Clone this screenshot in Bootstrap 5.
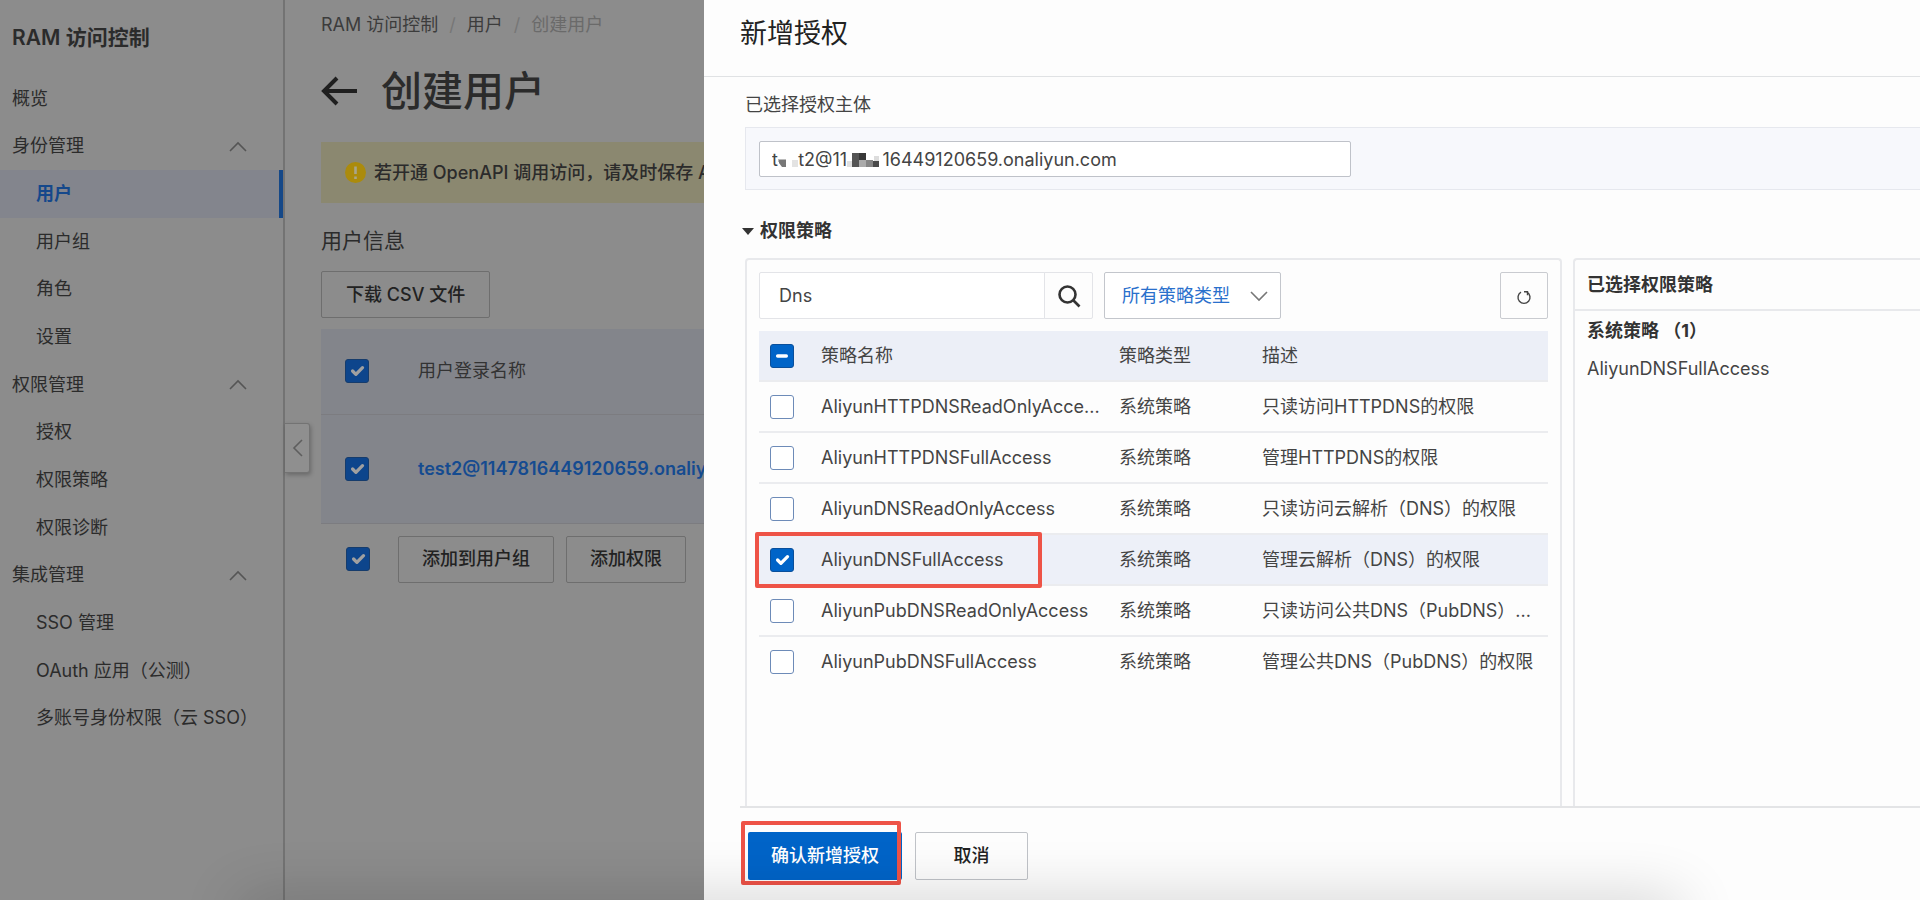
<!DOCTYPE html>
<html lang="zh-CN">
<head>
<meta charset="utf-8">
<meta name="viewport" content="width=device-width, initial-scale=1">
<title>RAM 访问控制 - 创建用户</title>
<link href="https://cdn.jsdelivr.net/npm/bootstrap@5.3.0/dist/css/bootstrap.min.css" rel="stylesheet">
<style>
  :root { --ink:#444; --line:#e3e4e8; --brand:#0064c8; --dim:#8c8c8c; --dim-ink:#2b2b2b; --dim-line:#6e6e6e; --dim-blue:#0d458c; --tint:#edf0f8; }
  body { font:400 18px/24px Inter,"Noto Sans CJK SC",sans-serif; background:var(--dim); color:var(--dim-ink); min-height:100vh; overflow:hidden; }
  a { color:inherit; text-decoration:none; }
  .form-control, .form-select, .btn { font-size:inherit; line-height:24px; border-radius:2px; color:var(--ink); }

  /* side navigation */
  .side { width:285px; border-right:2px solid #737373; min-height:100vh; }
  .side-title { font-size:21px; font-weight:600; padding:25px 12px 0; line-height:26px; }
  .side-menu { display:grid; grid-template-columns:minmax(0,1fr); grid-auto-rows:1fr; height:667px; margin-top:24px; }
  .side-menu a { display:flex; align-items:center; height:100%; padding:0 36px 0 12px; white-space:nowrap; }
  .side-menu .sub a { padding-left:36px; padding-right:0; }
  .side-menu .current a { background:#83858d; color:#15488b; font-weight:600; border-right:4px solid #154888; }
  .fold { left:285px; top:423px; width:25px; height:50px; background:#8f8f8f; border:1px solid #737373; border-left:0; border-radius:0 3px 3px 0; box-shadow:1px 2px 4px rgba(0,0,0,.25); }

  /* page behind the drawer */
  .page { padding:13px 0 0 36px; }
  .crumbs { --bs-breadcrumb-divider-color:#777; --bs-breadcrumb-item-padding-x:11px; --bs-breadcrumb-item-active-color:#6a6a6a; color:#3c3c3c; }
  .page h1 { font-size:41px; line-height:52px; font-weight:500; }
  .notice { height:61px; background:#8b8870; padding:0 24px; margin-top:25px; font-weight:500; }
  .page h2 { font-size:21px; line-height:28px; font-weight:400; }
  .btn-dim { border:1px solid var(--dim-line); color:#222; height:47px; padding:0 24px; font-weight:500; }
  .users { margin-top:11px; }
  .users td, .users th { background:#83858b; color:#333; border-color:#7c7c80; font-weight:400; padding:0; vertical-align:middle; }
  .users .pick { width:97px; padding-left:24px; }
  .users a { color:#154b90; font-weight:600; }
  .bulk { gap:12px; margin-top:12px; padding-left:25px; }
  .bulk .btn-dim { padding:0 23px; }

  /* tick boxes */
  .form-check-input[type=checkbox] { width:24px; height:24px; margin:0; border:1px solid #6d8bb8; border-radius:3px; display:block; }
  .form-check-input[type=checkbox]:checked, .form-check-input[type=checkbox]:indeterminate { background-color:var(--brand); border-color:#0a4f9b; }
  .shade .form-check-input[type=checkbox]:checked { background-color:var(--dim-blue); border-color:#163c6c; background-image:url("data:image/svg+xml,%3csvg xmlns='http://www.w3.org/2000/svg' viewBox='0 0 20 20'%3e%3cpath fill='none' stroke='%23a0a0a0' stroke-linecap='round' stroke-linejoin='round' stroke-width='3' d='m6 10 3 3 6-6'/%3e%3c/svg%3e"); }

  /* drawer */
  .drawer.offcanvas { --bs-offcanvas-width:calc(100vw - 704px); --bs-offcanvas-bg:#fdfdfd; --bs-offcanvas-border-width:0; color:var(--ink); transition:none; }
  .drawer-head { height:77px; padding:0 36px 9px; border-bottom:1px solid #e0e2e4; }
  .drawer-head h2 { font-size:27px; line-height:36px; font-weight:400; color:#222; }
  .drawer-main { padding:0 0 0 41px; }
  .who-label { margin:16px 0 10px; }
  .who { height:63px; background:#f7f8fc; border:1px solid #e6e8ee; border-right:0; padding:13px; }
  .who .form-control { width:592px; height:36px; border:1px solid #bfc2c9; padding:0 12px; }
  .mosaic { left:32px; top:25px; }
  .section-head { margin:29px 0 15px -3px; gap:6px; color:#333; }
  .panes { gap:11px; }
  .pane { border:2px solid #e8e9ec; border-bottom:0; border-radius:4px 4px 0 0; }
  .pane-left { width:817px; padding:12px 12px 0; }
  .pane-right { border-right:0; border-top-right-radius:0; }
  .pane-right > div { padding:0 12px; }
  .pane-right .picked-head { height:51px; border-bottom:2px solid #e8e9ec; color:#333; }
  .pane-right .picked-kind { margin:8px 0 14px; color:#333; }
  .tools { gap:11px; margin-bottom:12px; }
  .finder { width:334px; height:47px; }
  .finder .form-control { border-color:#e3e4e8; padding-left:19px; }
  .finder .btn { width:49px; border:1px solid #e3e4e8; }
  .kind { width:177px; height:47px; border:1px solid #c3c6cc; color:#2a70cc; padding:0 17px; background-image:url("data:image/svg+xml,%3csvg xmlns='http://www.w3.org/2000/svg' viewBox='0 0 18 12'%3e%3cpath fill='none' stroke='%23777' stroke-width='1.6' d='m1 2 8 8 8-8'/%3e%3c/svg%3e"); background-size:18px 12px; background-position:right 12px center; }
  .reload { width:48px; height:47px; border:1px solid #c9cbd0; }
  .rules { table-layout:fixed; white-space:nowrap; }
  .rules th, .rules td { height:51px; padding:0; vertical-align:middle; font-weight:400; border-bottom:2px solid #ebecef; color:var(--ink); background:transparent; }
  .rules th { height:50px; background:#eceff7; }
  .rules tr.picked td { background:var(--tint); }
  .rules tbody tr:last-child td { border-bottom:0; }
  .rules .form-check-input[type=checkbox] { margin-left:11px; }
  .drawer-foot { height:94px; margin-left:36px; border-top:2px solid #e3e4e6; padding:24px 0 0 8px; gap:13px; }
  .drawer-foot .btn { height:48px; font-weight:500; }
  .drawer-foot .btn-go { background:var(--brand); color:#fff; width:154px; padding:0; }
  .drawer-foot .btn-no { border:1px solid #c0c3c8; color:#222; width:113px; }
  .marker { border:4px solid #ee5347; border-radius:2px; pointer-events:none; }
  .marker-row { left:-4px; top:-3px; width:287px; height:56px; }
  .marker-go { left:-7px; top:-11px; width:160px; height:64px; }
  .dock-shadow { left:13vw; right:13vw; bottom:-30px; height:20px; box-shadow:0 0 60px 10px rgba(0,0,0,.2); z-index:1080; pointer-events:none; }
</style>
</head>
<body>
<div class="shade d-flex position-relative">
  <nav class="side flex-shrink-0" aria-label="RAM 访问控制">
    <div class="side-title">RAM 访问控制</div>
    <ul class="side-menu list-unstyled mb-0">
      <li><a href="#">概览</a></li>
      <li><a href="#">身份管理<svg class="ms-auto" width="18" height="11" viewBox="0 0 18 11" fill="none" stroke="#555" stroke-width="1.6"><path d="m1 10 8-8 8 8"/></svg></a></li>
      <li class="sub current"><a href="#" aria-current="page">用户</a></li>
      <li class="sub"><a href="#">用户组</a></li>
      <li class="sub"><a href="#">角色</a></li>
      <li class="sub"><a href="#">设置</a></li>
      <li><a href="#">权限管理<svg class="ms-auto" width="18" height="11" viewBox="0 0 18 11" fill="none" stroke="#555" stroke-width="1.6"><path d="m1 10 8-8 8 8"/></svg></a></li>
      <li class="sub"><a href="#">授权</a></li>
      <li class="sub"><a href="#">权限策略</a></li>
      <li class="sub"><a href="#">权限诊断</a></li>
      <li><a href="#">集成管理<svg class="ms-auto" width="18" height="11" viewBox="0 0 18 11" fill="none" stroke="#555" stroke-width="1.6"><path d="m1 10 8-8 8 8"/></svg></a></li>
      <li class="sub"><a href="#">SSO 管理</a></li>
      <li class="sub"><a href="#">OAuth 应用（公测）</a></li>
      <li class="sub"><a href="#">多账号身份权限（云 SSO）</a></li>
    </ul>
  </nav>
  <button type="button" class="fold btn position-absolute p-0 d-flex align-items-center justify-content-center" aria-label="收起导航"><svg width="11" height="18" viewBox="0 0 11 18" fill="none" stroke="#5e5e5e" stroke-width="1.6"><path d="m10 1-8 8 8 8"/></svg></button>

  <main class="page flex-grow-1">
    <nav aria-label="breadcrumb">
      <ol class="crumbs breadcrumb mb-0">
        <li class="breadcrumb-item"><a href="#">RAM 访问控制</a></li>
        <li class="breadcrumb-item"><a href="#">用户</a></li>
        <li class="breadcrumb-item active" aria-current="page">创建用户</li>
      </ol>
    </nav>
    <div class="d-flex align-items-center mt-4 pt-1 gap-4">
      <a href="#" aria-label="返回"><svg class="d-block" width="36" height="30" viewBox="0 0 36 30" fill="none" stroke="#1f1f1f" stroke-width="4"><path d="M3 15h33M16 2 3 15l13 13"/></svg></a>
      <h1 class="mb-0">创建用户</h1>
    </div>
    <div class="notice d-flex align-items-center gap-2" role="alert">
      <svg class="flex-shrink-0" width="21" height="21" viewBox="0 0 21 21"><circle cx="10.5" cy="10.5" r="10.5" fill="#ab8b0c"/><path d="M10.5 4.5V12M10.5 14.5V17" stroke="#a9a58a" stroke-width="2.6"/></svg>
      <span>若开通 OpenAPI 调用访问，请及时保存 AccessKey 信息</span>
    </div>
    <h2 class="mt-4 mb-3">用户信息</h2>
    <button type="button" class="btn btn-dim">下载 CSV 文件</button>
    <table class="users table mb-0">
      <thead><tr height="85"><th class="pick"><input class="form-check-input" type="checkbox" checked aria-label="全选用户"></th><th>用户登录名称</th></tr></thead>
      <tbody><tr height="109"><td class="pick"><input class="form-check-input" type="checkbox" checked aria-label="选择用户"></td><td><a href="#">test2@1147816449120659.onaliyun.com</a></td></tr></tbody>
    </table>
    <div class="bulk d-flex align-items-center">
      <input class="form-check-input me-3" type="checkbox" checked aria-label="全选">
      <button type="button" class="btn btn-dim">添加到用户组</button>
      <button type="button" class="btn btn-dim">添加权限</button>
    </div>
  </main>
</div>

<section class="drawer offcanvas offcanvas-end show" data-bs-backdrop="false" data-bs-scroll="true" tabindex="-1" aria-labelledby="drawerTitle">
  <header class="drawer-head d-flex align-items-center"><h2 class="mb-0" id="drawerTitle">新增授权</h2></header>
  <div class="drawer-main flex-grow-1 d-flex flex-column">
    <label class="who-label" for="principal">已选择授权主体</label>
    <div class="who position-relative">
      <input class="form-control" id="principal" type="text" value="t    t2@11       16449120659.onaliyun.com">
      <svg class="mosaic position-absolute" width="102" height="14" viewBox="0 0 102 14" aria-hidden="true">
        <path fill="#bbb" d="M0 6h8v3H0z"/><path fill="#777" d="M1 7h7v7H4L1 10z"/><path fill="#e3e3e3" d="M14 7h6v7h-6z"/>
        <path fill="#e0e0e0" d="M69 8h5v6h-5z"/><path fill="#555" d="M74 0h7v14h-7z"/><path fill="#383838" d="M81 0h7v7h-7z"/><path fill="#aaa" d="M81 7h7v7h-7z"/><path fill="#858585" d="M88 7h7v7h-7z"/><path fill="#4a4a4a" d="M95 8h6v6h-6z"/><path fill="#ddd" d="M96 3h5v5h-5z"/>
      </svg>
    </div>
    <div class="section-head fw-bold d-flex align-items-center"><svg width="12" height="7" viewBox="0 0 12 7"><path fill="#333" d="M0 0h12L6 7z"/></svg>权限策略</div>
    <div class="panes d-flex flex-grow-1">
      <div class="pane pane-left flex-shrink-0">
        <div class="tools d-flex">
          <div class="finder input-group">
            <input class="form-control" type="text" value="Dns" aria-label="搜索策略">
            <button class="btn p-0" type="button" aria-label="搜索"><svg width="24" height="24" viewBox="0 0 24 24" fill="none" stroke="#333" stroke-width="2.6"><circle cx="10.5" cy="10.5" r="8"/><path d="m16.5 16.5 6 6"/></svg></button>
          </div>
          <select class="kind form-select" aria-label="策略类型"><option>所有策略类型</option></select>
          <button class="reload btn p-0 ms-auto" type="button" aria-label="刷新"><svg width="16" height="16" viewBox="0 0 16 16" fill="none" stroke="#444" stroke-width="1.4"><path d="M5 3.2A6 6 0 1 0 11 3.2"/><path d="M8 2.8h3.5v3.5"/></svg></button>
        </div>
        <table class="rules table mb-0">
          <colgroup><col style="width:62px"><col style="width:298px"><col style="width:143px"><col></colgroup>
          <thead><tr><th><input class="form-check-input" type="checkbox" id="pickAll" aria-label="全选策略"></th><th>策略名称</th><th>策略类型</th><th>描述</th></tr></thead>
          <tbody>
            <tr><td><input class="form-check-input" type="checkbox" id="r1"></td><td><label for="r1">AliyunHTTPDNSReadOnlyAcce...</label></td><td>系统策略</td><td>只读访问HTTPDNS的权限</td></tr>
            <tr><td><input class="form-check-input" type="checkbox" id="r2"></td><td><label for="r2">AliyunHTTPDNSFullAccess</label></td><td>系统策略</td><td>管理HTTPDNS的权限</td></tr>
            <tr><td><input class="form-check-input" type="checkbox" id="r3"></td><td><label for="r3">AliyunDNSReadOnlyAccess</label></td><td>系统策略</td><td>只读访问云解析（DNS）的权限</td></tr>
            <tr class="picked"><td class="position-relative"><input class="form-check-input" type="checkbox" id="r4" checked><span class="marker marker-row position-absolute"></span></td><td><label for="r4">AliyunDNSFullAccess</label></td><td>系统策略</td><td>管理云解析（DNS）的权限</td></tr>
            <tr><td><input class="form-check-input" type="checkbox" id="r5"></td><td><label for="r5">AliyunPubDNSReadOnlyAccess</label></td><td>系统策略</td><td>只读访问公共DNS（PubDNS）...</td></tr>
            <tr><td><input class="form-check-input" type="checkbox" id="r6"></td><td><label for="r6">AliyunPubDNSFullAccess</label></td><td>系统策略</td><td>管理公共DNS（PubDNS）的权限</td></tr>
          </tbody>
        </table>
      </div>
      <div class="pane pane-right flex-grow-1">
        <div class="picked-head fw-bold d-flex align-items-center">已选择权限策略</div>
        <div class="picked-kind fw-bold">系统策略 （1）</div>
        <div>AliyunDNSFullAccess</div>
      </div>
    </div>
  </div>
  <footer class="drawer-foot d-flex align-items-start">
    <div class="position-relative"><button type="button" class="btn btn-go">确认新增授权</button><span class="marker marker-go position-absolute"></span></div>
    <button type="button" class="btn btn-no">取消</button>
  </footer>
</section>
<div class="dock-shadow position-fixed"></div>

<script src="https://cdn.jsdelivr.net/npm/bootstrap@5.3.0/dist/js/bootstrap.bundle.min.js"></script>
<script>document.getElementById('pickAll').indeterminate = true;</script>
</body>
</html>
